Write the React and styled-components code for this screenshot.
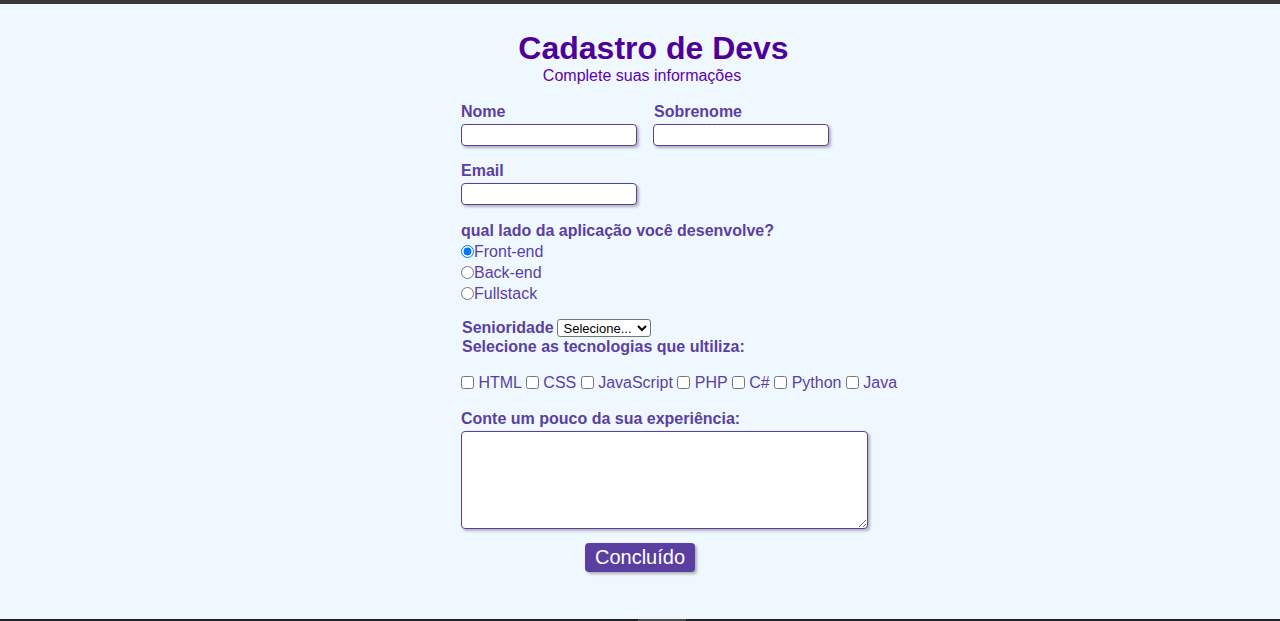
import React from 'react'
import styled, { createGlobalStyle } from 'styled-components'

const GlobalStyle = createGlobalStyle`
  * { box-sizing: border-box; }
  html, body {
    margin: 0;
    padding: 0;
    background: #f0f8ff;
    font-family: "Liberation Sans", Arial, sans-serif;
  }
`

const Page = styled.div`
  min-height: 100vh;
  display: flex;
  flex-direction: column;
  background: #f0f8ff;
`

const TopBar = styled.div`
  height: 4px;
  background: #383838;
`

const BottomBar = styled.div`
  height: 2px;
  background: #202124;
  display: flex;
`

const Thumb = styled.div`
  width: 48px;
  margin-left: 638px;
  background: #4a4a4a;
`

const Main = styled.main`
  flex: 1;
`

const Title = styled.h1`
  margin: 26px 0 0;
  padding-left: 27px;
  font-size: 32px;
  line-height: 37px;
  font-weight: bold;
  text-align: center;
  color: #4f0099;
`

const Subtitle = styled.p`
  margin: 0;
  padding-left: 4px;
  font-size: 16px;
  line-height: 18px;
  text-align: center;
  color: #5e00ab;
`

const Form = styled.form`
  width: 358px;
  margin: 18px auto 0;
  display: flex;
  flex-direction: column;
  color: #5b3fa0;
`

const Row = styled.div`
  display: flex;
  gap: 16px;
  margin-top: ${p => p.$top || 0}px;
`

const Field = styled.div`
  display: flex;
  flex-direction: column;
  flex-shrink: 0;
`

const Label = styled.label`
  display: block;
  font-size: 16px;
  line-height: 18px;
  font-weight: bold;
  white-space: nowrap;
  padding-left: ${p => p.$indent || 0}px;
  margin-top: ${p => p.$top || 0}px;
`

const Input = styled.input`
  width: 176px;
  height: 22px;
  margin-top: 3px;
  border: 1px solid #5b3fa0;
  border-radius: 4px;
  background: #fff;
  box-shadow: 2px 2px 3px rgba(0, 0, 0, 0.28);
  outline: none;
`

const Options = styled.div`
  margin-top: 1px;
`

const Option = styled.label`
  display: block;
  font-size: 16px;
  line-height: 21px;
  white-space: nowrap;
`

const Radio = styled.input`
  width: 13px;
  height: 13px;
  margin: 0;
  vertical-align: -1px;
`

const SelectRow = styled.div`
  display: flex;
  align-items: center;
  height: 21px;
  margin-top: 13px;
  padding-left: 1px;
  font-size: 16px;
  font-weight: bold;
`

const Select = styled.select`
  height: 18px;
  width: 94px;
  margin-left: 3px;
  font-family: "Liberation Sans", Arial, sans-serif;
  font-size: 13px;
  color: #000;
  background: #fff;
  border: 1px solid #767676;
  border-radius: 3px;
  padding: 0 0 0 2px;
`

const Checks = styled.div`
  margin-top: 18px;
  font-size: 16px;
  line-height: 18px;
  white-space: nowrap;
`

const Check = styled.input`
  width: 13px;
  height: 13px;
  margin: 0;
  vertical-align: -1px;
`

const TextArea = styled.textarea`
  width: 407px;
  height: 98px;
  margin-top: 3px;
  flex-shrink: 0;
  border: 1px solid #5b3fa0;
  border-radius: 4px;
  background: #fff;
  box-shadow: 2px 2px 3px rgba(0, 0, 0, 0.28);
  resize: both;
  outline: none;
`

const Button = styled.button`
  align-self: center;
  margin-top: 14px;
  width: 110px;
  height: 29px;
  padding: 0;
  border: none;
  border-radius: 4px;
  background: #5b3fa0;
  color: #fff;
  font-family: "Liberation Sans", Arial, sans-serif;
  font-size: 20px;
  line-height: 23px;
  box-shadow: 2px 2px 3px rgba(0, 0, 0, 0.3);
  cursor: pointer;
`

const techs = ['HTML', 'CSS', 'JavaScript', 'PHP', 'C#', 'Python', 'Java']

function App() {
  return (
    <Page>
      <GlobalStyle />
      <TopBar />
      <Main>
        <Title>Cadastro de Devs</Title>
        <Subtitle>Complete suas informações</Subtitle>
        <Form onSubmit={e => e.preventDefault()}>
          <Row>
            <Field>
              <Label htmlFor="nome">Nome</Label>
              <Input id="nome" type="text" />
            </Field>
            <Field>
              <Label htmlFor="sobrenome" $indent={1}>Sobrenome</Label>
              <Input id="sobrenome" type="text" />
            </Field>
          </Row>
          <Row $top={16}>
            <Field>
              <Label htmlFor="email">Email</Label>
              <Input id="email" type="email" />
            </Field>
          </Row>

          <Label $top={17}>qual lado da aplicação você desenvolve?</Label>
          <Options>
            <Option><Radio type="radio" name="lado" defaultChecked />Front-end</Option>
            <Option><Radio type="radio" name="lado" />Back-end</Option>
            <Option><Radio type="radio" name="lado" />Fullstack</Option>
          </Options>

          <SelectRow>
            Senioridade
            <Select defaultValue="">
              <option value="">Selecione...</option>
              <option value="junior">Júnior</option>
              <option value="pleno">Pleno</option>
              <option value="senior">Sênior</option>
            </Select>
          </SelectRow>
          <Label $indent={1}>Selecione as tecnologias que ultiliza:</Label>

          <Checks>
            {techs.map((t, i) => (
              <React.Fragment key={t}>
                <Check type="checkbox" /> {t}{i < techs.length - 1 ? ' ' : ''}
              </React.Fragment>
            ))}
          </Checks>

          <Label $top={18} htmlFor="exp">Conte um pouco da sua experiência:</Label>
          <TextArea id="exp" />

          <Button type="submit">Concluído</Button>
        </Form>
      </Main>
      <BottomBar>
        <Thumb />
      </BottomBar>
    </Page>
  )
}

export default App
